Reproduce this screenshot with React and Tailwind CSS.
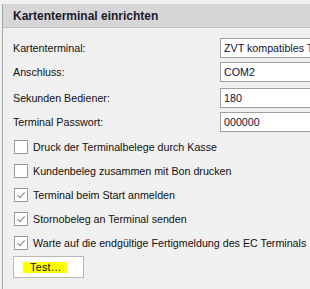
const fields = [
  { label: "Kartenterminal:", value: "ZVT kompatibles Terminal", mt: "mt-[10px]" },
  { label: "Anschluss:", value: "COM2", mt: "mt-[4px]" },
  { label: "Sekunden Bediener:", value: "180", mt: "mt-[6px]" },
  { label: "Terminal Passwort:", value: "000000", mt: "mt-[4px]" },
];

const options = [
  { text: "Druck der Terminalbelege durch Kasse", checked: false },
  { text: "Kundenbeleg zusammen mit Bon drucken", checked: false },
  { text: "Terminal beim Start anmelden", checked: true },
  { text: "Stornobeleg an Terminal senden", checked: true },
  { text: "Warte auf die endgültige Fertigmeldung des EC Terminals", checked: true },
];

function CheckBox({ checked }) {
  return (
    <div className="w-[14px] h-[14px] shrink-0 border border-[#9a9a9a] bg-white flex items-center justify-center">
      {checked && (
        <svg width="10" height="10" viewBox="0 0 10 10">
          <path d="M1.5 5.2 L4 7.6 L8.6 2.4" fill="none" stroke="#8a8a8a" strokeWidth="1.1" />
        </svg>
      )}
    </div>
  );
}

export default function App() {
  return (
    <div
      className="w-[310px] h-[289px] overflow-hidden bg-[#f0f0f0] pt-[4px] text-[10.7px] text-[#111]"
      style={{ fontFamily: "'Liberation Sans', Arial, sans-serif" }}
    >
      <div className="ml-[2px] h-full border-l border-[#a8a8a8]">
        {/* Header */}
        <div className="h-[24px] bg-[#d6d6d6] border-b border-[#c4c4c4] pl-[10px] flex items-center font-bold text-[12px] text-[#1b1b2e]">
          Kartenterminal einrichten
        </div>

        {/* Fields */}
        <div className="pl-[10px]">
          {fields.map((f) => (
            <div key={f.label} className={`flex items-center ${f.mt}`}>
              <div className="w-[207px] shrink-0">{f.label}</div>
              <div className="w-[120px] shrink-0 h-[20px] bg-white border border-[#a0a0a0] px-[3px] flex items-center text-[#10103a] whitespace-nowrap overflow-hidden">
                {f.value}
              </div>
            </div>
          ))}
        </div>

        {/* Options */}
        <div className="pl-[11px] mt-[8px] flex flex-col gap-[10px]">
          {options.map((o) => (
            <div key={o.text} className="flex items-center gap-[5px] h-[14px] whitespace-nowrap">
              <CheckBox checked={o.checked} />
              <span>{o.text}</span>
            </div>
          ))}
        </div>

        <div className="pl-[10px] mt-[6px]">
          <button className="w-[71px] h-[22px] bg-white border border-[#b8b8b8] pl-[9px] text-left flex items-center">
            <span className="bg-[#ffff00] pl-[7px] pr-[5px] h-[11px] flex items-center tracking-[0.3px]">Test…</span>
          </button>
        </div>
      </div>
    </div>
  );
}
